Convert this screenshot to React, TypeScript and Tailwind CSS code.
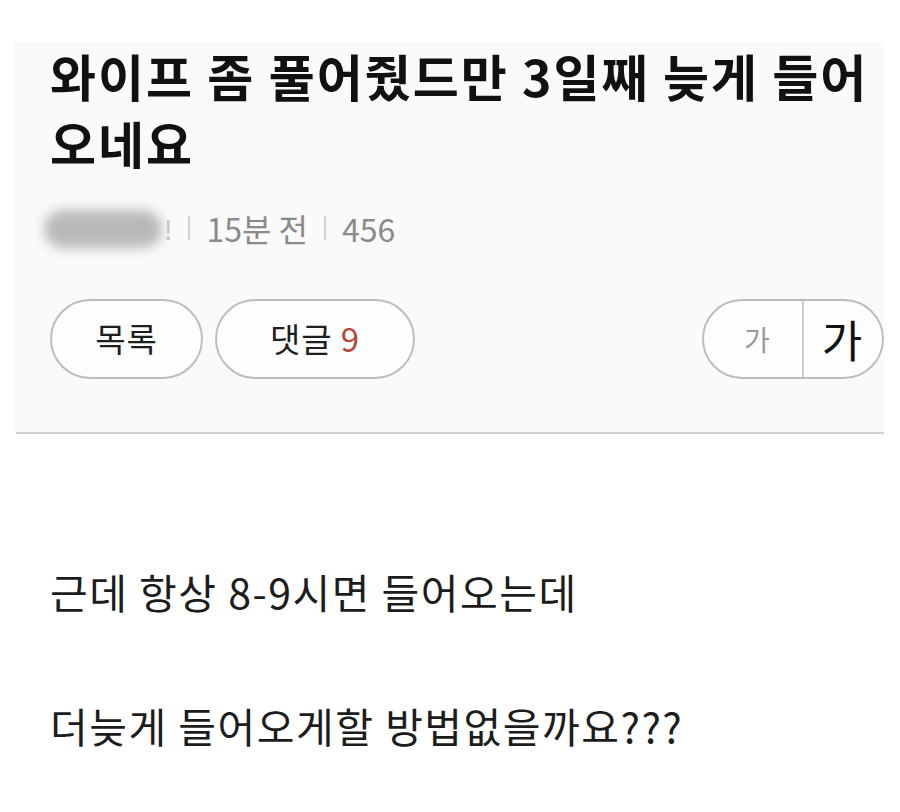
const App = () => {
  return (
    <div className="min-h-[812px] bg-white font-['Noto_Sans_CJK_KR','Noto_Sans',sans-serif] text-[#1a1a1a]">
      <div className="pt-[42px] pl-[14px] pr-[16px]">
        <div className="bg-[#fafafa] pl-[36px] pt-0 pb-[53px]">
          <h1 className="text-[50px] leading-[67px] tracking-[2px] font-bold text-[#111] whitespace-nowrap">
            와이프 좀 풀어줬드만 3일째 늦게 들어
            <br />
            오네요
          </h1>
          <MetaRow />
          <div className="flex items-center mt-[51px]">
            <PillButton className="w-[153px]">목록</PillButton>
            <PillButton className="w-[200px] ml-[12px]">
              댓글 <span className="text-[#b4473c] ml-[8px]">9</span>
            </PillButton>
            <FontToggle />
          </div>
        </div>
        <div className="h-[2px] bg-[#cfcfcf] ml-[2px]" />
      </div>
      <div className="pl-[50px] mt-[124px] text-[41px] leading-[67px] tracking-[1.5px] text-[#1c1c1c] whitespace-nowrap">
        <p>근데 항상 8-9시면 들어오는데</p>
        <p>&nbsp;</p>
        <p>더늦게 들어오게할 방법없을까요???</p>
      </div>
    </div>
  );
};

const MetaRow = () => (
  <div className="flex items-center h-[40px] mt-[32px] -ml-[10px] text-[32px] text-[#8a8a8a]">
    <div className="relative w-[124px] h-[40px]">
      <div className="absolute left-[4px] top-[2px] w-[118px] h-[38px] rounded-full bg-[#b9b9b9] blur-[6px]" />
    </div>
    <span className="text-[#c4c4c4] text-[26px]">!</span>
    <Sep />
    <span>15분 전</span>
    <Sep />
    <span>456</span>
  </div>
);

const Sep = () => <div className="w-[2px] h-[24px] bg-[#d2d2d2] mx-[16px]" />;

const PillButton = ({ children, className = "" }) => (
  <div
    className={`${className} h-[80px] rounded-full border-2 border-[#bdbdbd] bg-[#fdfdfd] flex items-center justify-center text-[33px] tracking-[1px] text-[#1e1e1e]`}
  >
    {children}
  </div>
);

const FontToggle = () => (
  <div className="ml-auto flex h-[80px] w-[182px] rounded-full border-2 border-[#bdbdbd] bg-[#fdfdfd] overflow-hidden">
    <div className="w-[98px] flex items-center justify-center pl-[8px] text-[28px] text-[#9a9a9a]">
      가
    </div>
    <div className="w-[2px] bg-[#cccccc]" />
    <div className="flex-1 flex items-center justify-center pr-[2px] text-[44px] text-[#111]">
      가
    </div>
  </div>
);

export default App;
